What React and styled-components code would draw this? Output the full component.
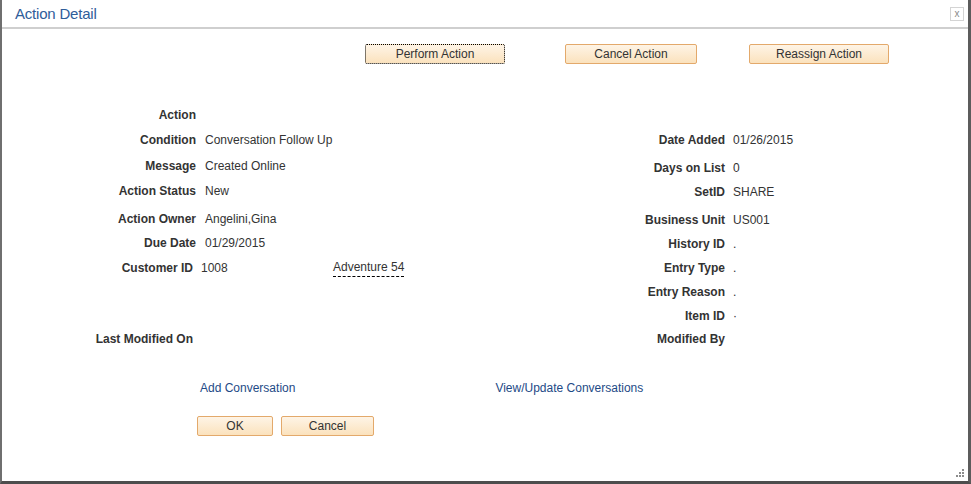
import styled, { createGlobalStyle } from "styled-components";

const Global = createGlobalStyle`
  html, body {
    margin: 0;
    padding: 0;
    background: #fff;
  }
  body {
    font-family: "Liberation Sans", Arial, sans-serif;
    font-size: 12px;
    color: #333;
  }
`;

const Dialog = styled.div`
  box-sizing: border-box;
  width: 971px;
  height: 484px;
  border-left: 2px solid #6f6f6f;
  border-right: 3px solid #5c5c5c;
  border-bottom: 3px solid #4d4d4d;
  display: flex;
  flex-direction: column;
  position: relative;
  background: #fff;
`;

const Header = styled.div`
  height: 29px;
  box-sizing: border-box;
  border-bottom: 2px solid #cfcfcf;
  display: flex;
  align-items: center;
  justify-content: space-between;
  padding: 0 4px 1px 13px;
`;

const Title = styled.div`
  font-size: 15px;
  color: #2f5d9a;
  letter-spacing: -0.2px;
`;

const CloseBtn = styled.div`
  width: 12px;
  height: 12px;
  border: 1px solid #d4d4d4;
  display: flex;
  align-items: center;
  justify-content: center;
  color: #8a8a8a;
  font-size: 10px;
  line-height: 1;
  margin-top: 1px;
`;

const Toolbar = styled.div`
  display: flex;
  padding: 15px 0 0 363px;
`;

const Button = styled.button`
  box-sizing: border-box;
  height: 20px;
  width: ${(p) => p.$w}px;
  margin-left: ${(p) => p.$ml || 0}px;
  padding: 0;
  font-family: "Liberation Sans", Arial, sans-serif;
  font-size: 12px;
  color: #333;
  background: linear-gradient(#fef4e6, #fbe2bd);
  border: ${(p) => (p.$focus ? "1px dotted #000" : "1px solid #e3a96b")};
  border-radius: 2px;
  outline: none;
  cursor: pointer;
`;

const Fields = styled.div`
  display: flex;
  margin-top: 43px;
`;

const Panel = styled.div`
  width: ${(p) => p.$w}px;
  padding-top: ${(p) => p.$top}px;
  display: flex;
  flex-direction: column;
`;

const Row = styled.div`
  display: grid;
  grid-template-columns: ${(p) => p.$label}px auto;
  column-gap: ${(p) => p.$gap}px;
  height: ${(p) => p.$h}px;
  line-height: 16px;
`;

const Label = styled.div`
  font-weight: bold;
  text-align: right;
  color: #333;
  white-space: nowrap;
  padding-right: ${(p) => p.$pr || 0}px;
`;

const Value = styled.div`
  display: flex;
  white-space: nowrap;
  margin-left: ${(p) => p.$shift || 0}px;
`;

const CustNo = styled.span`
  width: 132px;
`;

const Related = styled.span`
  border-bottom: 1px dashed #000;
  line-height: 15px;
  height: 16px;
`;

const Links = styled.div`
  display: flex;
  padding-left: 198px;
  margin-top: 33px;
  line-height: 16px;
`;

const Link = styled.a`
  color: #1e4a86;
  text-decoration: none;
  margin-right: ${(p) => p.$mr || 0}px;
  cursor: pointer;
`;

const Footer = styled.div`
  display: flex;
  padding-left: 195px;
  margin-top: 20px;
`;

const Grip = styled.div`
  position: absolute;
  right: 4px;
  bottom: 4px;
  display: grid;
  grid-template-columns: repeat(3, 2px);
  grid-template-rows: repeat(3, 2px);
  gap: 1px;
`;

const Dot = styled.span`
  background: ${(p) => (p.$on ? "#8c8c8c" : "transparent")};
`;

const leftRows = [
  ["Action", "", 25, 0],
  ["Condition", "Conversation Follow Up", 26, 0],
  ["Message", "Created Online", 25, 0],
  ["Action Status", "New", 28, 0],
  ["Action Owner", "Angelini,Gina", 24, 0],
  ["Due Date", "01/29/2015", 25, 0],
  ["Customer ID", "customer", 71, 3],
  ["Last Modified On", "", 16, 3],
];

const rightRows = [
  ["Date Added", "01/26/2015", 28],
  ["Days on List", "0", 24],
  ["SetID", "SHARE", 28],
  ["Business Unit", "US001", 24],
  ["History ID", ".", 24],
  ["Entry Type", ".", 24],
  ["Entry Reason", ".", 24],
  ["Item ID", "·", 23],
  ["Modified By", "", 16],
];

const gripDots = [0, 0, 1, 0, 1, 1, 1, 1, 1];

function App() {
  return (
    <>
      <Global />
      <Dialog>
        <Header>
          <Title>Action Detail</Title>
          <CloseBtn>x</CloseBtn>
        </Header>

        <Toolbar>
          <Button $w={140} $focus>
            Perform Action
          </Button>
          <Button $w={132} $ml={60}>
            Cancel Action
          </Button>
          <Button $w={140} $ml={52}>
            Reassign Action
          </Button>
        </Toolbar>

        <Fields>
          <Panel $w={598} $top={0}>
            {leftRows.map(([label, value, h, pr]) => (
              <Row key={label} $label={194} $gap={9} $h={h}>
                <Label $pr={pr}>{label}</Label>
                {value === "customer" ? (
                  <Value $shift={-4}>
                    <CustNo>1008</CustNo>
                    <Related>Adventure 54</Related>
                  </Value>
                ) : (
                  <Value>{value}</Value>
                )}
              </Row>
            ))}
          </Panel>
          <Panel $w={360} $top={25}>
            {rightRows.map(([label, value, h]) => (
              <Row key={label} $label={125} $gap={8} $h={h}>
                <Label>{label}</Label>
                <Value>{value}</Value>
              </Row>
            ))}
          </Panel>
        </Fields>

        <Links>
          <Link $mr={200}>Add Conversation</Link>
          <Link>View/Update Conversations</Link>
        </Links>

        <Footer>
          <Button $w={76}>OK</Button>
          <Button $w={93} $ml={8}>
            Cancel
          </Button>
        </Footer>

        <Grip>
          {gripDots.map((on, i) => (
            <Dot key={i} $on={on} />
          ))}
        </Grip>
      </Dialog>
    </>
  );
}

export default App;
